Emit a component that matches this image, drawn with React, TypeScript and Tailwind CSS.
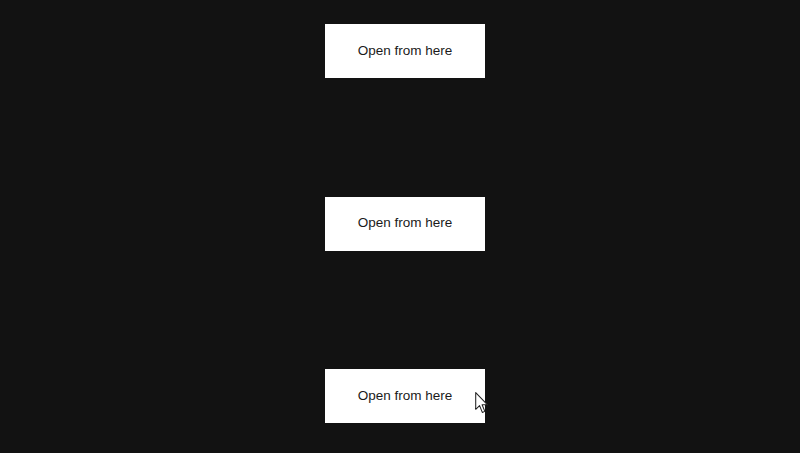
export default function App() {
  const rows = [0, 1, 2];
  return (
    <div className="relative min-h-[453px] w-full bg-[#121212] flex flex-col items-center pt-6 pl-[10px] gap-[118.5px] [font-family:'Liberation_Sans',Arial,sans-serif]">
      {rows.map((i) => (
        <button
          key={i}
          className="w-40 h-[54px] bg-white text-[#1a1a1a] text-[13.5px] flex items-center justify-center"
        >
          Open from here
        </button>
      ))}
      {/* mouse pointer seen in the capture */}
      <svg
        className="absolute left-[475px] top-[392px]"
        width="14"
        height="22"
        viewBox="0 0 13 21"
      >
        <path
          d="M0.5 0.5 L0.5 16.5 L4.2 13 L6.8 19.5 L9.2 18.5 L6.6 12.2 L11.8 12.2 Z"
          fill="white"
          stroke="#222"
          strokeWidth="1"
          strokeLinejoin="round"
        />
      </svg>
    </div>
  );
}
